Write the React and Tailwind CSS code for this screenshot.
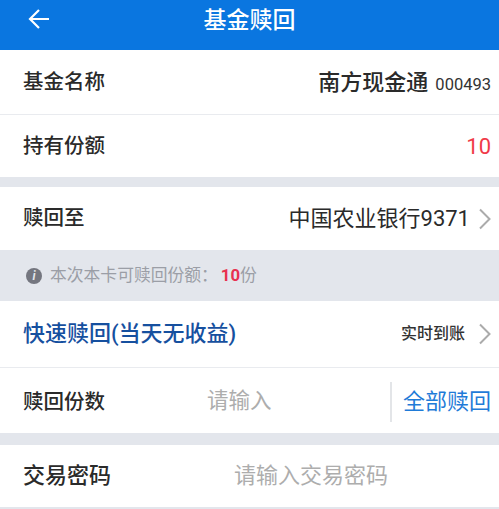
import React from "react";

const F = "font-['Roboto','Noto_Sans_CJK_SC',sans-serif]";

function Chevron() {
  return (
    <svg width="12" height="22" viewBox="0 0 12 22" fill="none" className="ml-[9px] shrink-0">
      <path d="M1 1.5 L10.5 11 L1 20.5" stroke="#ababab" strokeWidth="2" />
    </svg>
  );
}

function Row({ h, border, children, className = "" }) {
  return (
    <div className={`flex items-center justify-between bg-white pl-[23px] pr-[8px] ${border ? "border-b border-[#e9ebef]" : ""} ${className}`} style={{ height: h }}>
      {children}
    </div>
  );
}

function Label({ children }) {
  return <span className="text-[20.5px] leading-none text-[#2a2a2a] font-medium whitespace-nowrap">{children}</span>;
}

export default function App() {
  return (
    <div className={`w-[499px] h-[509px] overflow-hidden bg-[#e3e6ec] ${F}`}>
      <div className="relative flex h-[50px] items-center justify-center bg-[#0a76e0]">
        <svg width="22" height="22" viewBox="0 0 22 22" fill="none" className="absolute left-[28px] top-[8px]">
          <path d="M21 11 H2 M11 2 L2 11 L11 20" stroke="#ffffff" strokeWidth="2.2" />
        </svg>
        <span className="text-[23px] leading-none text-white font-medium mb-[9px]">基金赎回</span>
      </div>

      <Row h={65} border>
        <Label>基金名称</Label>
        <span className="flex items-baseline whitespace-nowrap">
          <span className="text-[22px] font-medium text-[#2a2a2a]">南方现金通</span>
          <span className="ml-[7px] text-[16.5px] text-[#333333]">000493</span>
        </span>
      </Row>
      <Row h={62}>
        <Label>持有份额</Label>
        <span className="text-[22px] text-[#f03a48]">10</span>
      </Row>

      <div className="h-[10px]" />

      <Row h={63}>
        <Label>赎回至</Label>
        <span className="flex items-center whitespace-nowrap">
          <span className="text-[22px] text-[#2a2a2a]">中国农业银行9371</span>
          <Chevron />
        </span>
      </Row>

      <div className="flex h-[51px] items-center pl-[26px] text-[16.8px] text-[#9b9ea6]">
        <span className="mr-[8px] flex h-[16px] w-[16px] items-center justify-center rounded-full bg-[#74767f] text-[12px] font-bold italic leading-none text-[#e3e6ec]">i</span>
        <span>本次本卡可赎回份额：</span>
        <span className="ml-[3px] font-bold text-[#e8304f]">10</span>
        <span>份</span>
      </div>

      <Row h={67} border>
        <span className="text-[22px] leading-none text-[#16509f] font-medium whitespace-nowrap">快速赎回(当天无收益)</span>
        <span className="flex items-center whitespace-nowrap">
          <span className="text-[16px] text-[#333333] font-medium">实时到账</span>
          <span className="ml-[5px] flex"><Chevron /></span>
        </span>
      </Row>

      <Row h={65} className="relative pt-[3px]">
        <Label>赎回份数</Label>
        <span className="absolute left-[207px] top-[22px] text-[21.5px] leading-none text-[#adadad]">请输入</span>
        <span className="flex h-[40px] items-center border-l-2 border-[#e3e5e8] pl-[11px]">
          <span className="text-[22px] leading-none text-[#1f7bd8]">全部赎回</span>
        </span>
      </Row>

      <div className="h-[12px]" />

      <Row h={62} className="relative">
        <span className="text-[22px] leading-none text-[#2a2a2a] font-medium">交易密码</span>
        <span className="absolute left-[234px] top-[20px] text-[22px] leading-none text-[#adadad]">请输入交易密码</span>
      </Row>
    </div>
  );
}
